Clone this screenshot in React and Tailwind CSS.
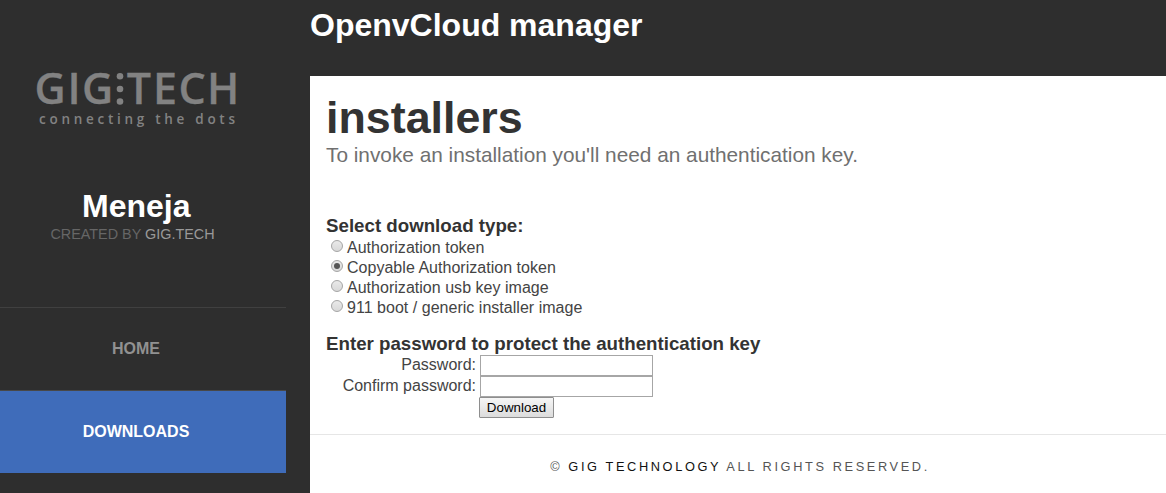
function Logo() {
  return (
    <svg width="230" height="84" viewBox="0 0 230 84" fill="#828282" className="mt-[54px] ml-[20px] block shrink-0" style={{ fontFamily: '"Open Sans", sans-serif' }}>
      <text x="14.5 47.6 62" y="50" fontSize="43" fontWeight="600" stroke="#828282" strokeWidth="0.3">GIG</text>
      <circle cx="100" cy="22.3" r="3.3" />
      <circle cx="100" cy="35" r="3.3" />
      <circle cx="100" cy="47.5" r="3.3" />
      <text x="106.7 132.9 158.6 187" y="50" fontSize="43" fontWeight="600" stroke="#828282" strokeWidth="0.3">TECH</text>
      <text x="19" y="70" fontSize="13.5" fontWeight="600" textLength="196" lengthAdjust="spacing">connecting the dots</text>
    </svg>
  );
}

function Sidebar() {
  return (
    <aside className="flex h-full w-[286px] shrink-0 flex-col">
      <Logo />
      <h2 className="mt-[50px] w-[272.5px] text-center text-[32px] leading-9 font-bold text-white">Meneja</h2>
      <p className="w-[265px] text-center text-[14.4px] leading-5 text-[#666]">
        CREATED BY <span className="text-[#999]">GIG.TECH</span>
      </p>
      <nav className="mt-[63px] text-base font-bold">
        <a className="flex h-[83px] items-center justify-center border-t border-[#404040] pr-[14px] text-[#919191]">HOME</a>
        <a className="flex h-[83px] items-center justify-center border-t border-[#484848] bg-[#3f6cba] pr-[14px] text-white">DOWNLOADS</a>
      </nav>
    </aside>
  );
}

const OPTIONS = ["Authorization token", "Copyable Authorization token", "Authorization usb key image", "911 boot / generic installer image"];

function RadioOption({ label, checked }) {
  return (
    <label className="flex h-5 items-center gap-1 pl-[5px]">
      <span className="mb-[2px] flex size-3 items-center justify-center rounded-full border border-[#a5a5a5] bg-linear-to-b from-[#e9e9e9] to-[#d8d8d8]">
        {checked && <span className="size-1.5 rounded-full bg-[#555]" />}
      </span>
      <span className="pt-[2px] leading-5 tracking-[0.025px]">{label}</span>
    </label>
  );
}

function PasswordField({ label }) {
  return (
    <label className="flex h-[21px]">
      <span className="w-[150px] text-right leading-[19px]">{label}</span>
      <input type="password" className="ml-1 h-[21px] w-[173px] border border-[#a6a6a6] bg-white outline-none" />
    </label>
  );
}

export default function App() {
  return (
    <div className="flex h-[493px] w-full overflow-hidden bg-[#2e2e2e] font-['Liberation_Sans',Arial,sans-serif] text-base text-[#444]">
      <Sidebar />
      <div className="ml-6 flex min-w-0 flex-1 flex-col">
        <header className="h-[76px] shrink-0 pt-[7px] text-[32px] leading-9 font-bold text-white">OpenvCloud manager</header>
        <main className="h-[358px] shrink-0 bg-white px-4 pt-[15px]">
          <h1 className="text-[44.8px] leading-[52px] font-bold text-[#333]">installers</h1>
          <p className="mt-px text-[20.8px] leading-[22px] text-[#707070]">To invoke an installation you'll need an authentication key.</p>
          <h3 className="mt-[49px] text-[18.72px] leading-[22px] font-bold text-[#333]">Select download type:</h3>
          {OPTIONS.map((label, index) => (
            <RadioOption key={label} label={label} checked={index === 1} />
          ))}
          <h3 className="mt-[16px] text-[18.72px] leading-[22px] font-bold text-[#333]">Enter password to protect the authentication key</h3>
          <PasswordField label="Password:" />
          <PasswordField label="Confirm password:" />
          <button className="ml-[153px] block h-[21px] w-[75px] rounded-[1px] border border-[#8e8e8e] bg-linear-to-b from-[#f6f6f6] to-[#dcdcdc] text-[13.333px] leading-[19px] text-black">Download</button>
        </main>
        <footer className="flex-1 border-t border-[#e6e6e6] bg-white pt-[22px] pl-[4px] text-center text-[12.8px] leading-5 tracking-[2.6px] text-[#555]">
          © <span className="text-[#111]">GIG TECHNOLOGY</span> ALL RIGHTS RESERVED.
        </footer>
      </div>
    </div>
  );
}
